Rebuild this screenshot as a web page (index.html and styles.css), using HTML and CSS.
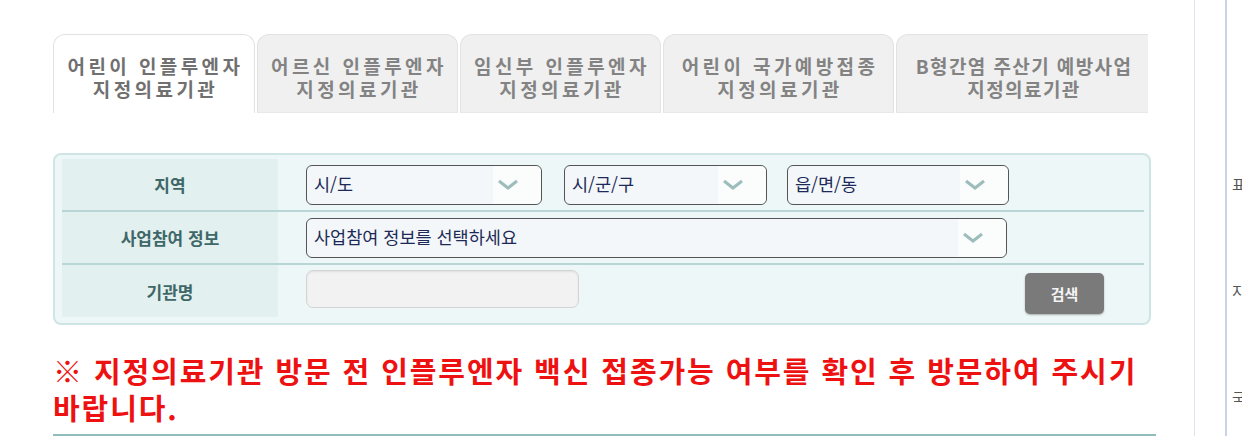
FILE: index.html
```
<!DOCTYPE html>
<html lang="ko">
<head>
    <meta charset="utf-8">
    <meta name="viewport" content="width=device-width, initial-scale=1">
    <link rel="stylesheet" href="styles.css">
</head>
<body>

<div class="page">
    <div class="main">
        <!-- tabs -->
        <div class="tabs">
            <div class="tab active">어린이 인플루엔자<br>지정의료기관</div>
            <div class="tab">어르신 인플루엔자<br>지정의료기관</div>
            <div class="tab">임신부 인플루엔자<br>지정의료기관</div>
            <div class="tab wide">어린이 국가예방접종<br>지정의료기관</div>
            <div class="tab last">B형간염 주산기 예방사업<br>지정의료기관</div>
        </div>

        <!-- search box -->
        <div class="search-box">
            <div class="row">
                <div class="label">지역</div>
                <div class="field">
                    <div class="select sido">시/도<span class="arrow"><svg width="22" height="12" viewBox="0 0 22 12"><polyline points="2,2 11,9 20,2" fill="none" stroke="#9dbdbd" stroke-width="3"/></svg></span></div>
                    <div class="select sigungu">시/군/구<span class="arrow"><svg width="22" height="12" viewBox="0 0 22 12"><polyline points="2,2 11,9 20,2" fill="none" stroke="#9dbdbd" stroke-width="3"/></svg></span></div>
                    <div class="select dong">읍/면/동<span class="arrow"><svg width="22" height="12" viewBox="0 0 22 12"><polyline points="2,2 11,9 20,2" fill="none" stroke="#9dbdbd" stroke-width="3"/></svg></span></div>
                </div>
            </div>
            <div class="row">
                <div class="label">사업참여 정보</div>
                <div class="field">
                    <div class="select business">사업참여 정보를 선택하세요<span class="arrow"><svg width="22" height="12" viewBox="0 0 22 12"><polyline points="2,2 11,9 20,2" fill="none" stroke="#9dbdbd" stroke-width="3"/></svg></span></div>
                </div>
            </div>
            <div class="row">
                <div class="label">기관명</div>
                <div class="field top">
                    <input type="text" class="name-input">
                    <span class="searchBtn">검색</span>
                </div>
            </div>
        </div>

        <p class="notice">※ 지정의료기관 방문 전 인플루엔자 백신 접종가능 여부를 확인 후 방문하여 주시기 바랍니다.</p>
        <div class="bottom-line"></div>
    </div>

    <div class="divider"></div>
    <div class="side">
        <div class="side-item first">표</div>
        <div class="side-item">지</div>
        <div class="side-item">국</div>
    </div>
</div>

</body>
</html>
```

FILE: styles.css
```
body {
    margin: 0;
    font-family: 'Noto Sans CJK KR', 'Noto Sans', sans-serif;
    background-color: #fff;
    color: #333;
}

.page {
    display: flex;
    height: 436px;
    overflow: hidden;
}

.main {
    margin-left: 53px;
    width: 1103px;
    flex-shrink: 0;
}

/* Tabs */
.tabs {
    display: flex;
    gap: 2px;
    width: 1095px;
    margin-top: 34px;
    overflow: hidden;
}

.tab {
    flex-shrink: 0;
    width: 201px;
    height: 79px;
    box-sizing: border-box;
    padding-top: 19px;
    padding-left: 3px;
    text-align: center;
    font-size: 19px;
    font-weight: bold;
    letter-spacing: 3.4px;
    line-height: 23px;
    color: #838383;
    background: #f0f0f0;
    border: 1px solid #e2e2e2;
    border-bottom: 1px solid #e8e8e8;
    border-radius: 12px 12px 0 0;
}

.tab.active {
    width: 202px;
    background: #fff;
    color: #707070;
    border-bottom: none;
}

.tab.wide {
    width: 231px;
}

.tab.last {
    width: 276px;
    padding-left: 0;
    padding-right: 20px;
    letter-spacing: 1.4px;
}

/* Search box */
.search-box {
    margin-top: 40px;
    width: 1098px;
    box-sizing: border-box;
    padding: 4px 5px 6px 7px;
    background: #eef7f7;
    border: 2px solid #cfe4e4;
    border-radius: 8px;
}

.row {
    display: flex;
    height: 51px;
    border-bottom: 2px solid #b9d6d6;
}

.row:last-child {
    height: 52px;
    border-bottom: none;
}

.label {
    width: 216px;
    flex-shrink: 0;
    display: flex;
    align-items: center;
    justify-content: center;
    background: #e2f0f0;
    font-size: 17px;
    font-weight: bold;
    color: #3f6767;
}

.field {
    flex: 1;
    display: flex;
    align-items: center;
    padding-left: 28px;
    gap: 22px;
}

.field.top {
    align-items: flex-start;
}

.select {
    position: relative;
    height: 40px;
    box-sizing: border-box;
    padding: 5px 0 0 7px;
    border: 1px solid #555;
    border-radius: 6px;
    background: #f3f7fa;
    font-size: 17.5px;
    color: #1d2a57;
}

.sido { width: 236px; }
.sigungu { width: 203px; }
.dong { width: 222px; margin-left: -2px; }
.business { width: 701px; }

/* arrow area of the select */
.arrow {
    position: absolute;
    right: 0;
    top: 0;
    width: 48px;
    height: 38px;
    display: flex;
    align-items: center;
    padding-left: 4px;
    box-sizing: border-box;
    border-radius: 0 6px 6px 0;
    background: #fbfcfc;
}

.name-input {
    margin-top: 5px;
    width: 273px;
    height: 38px;
    box-sizing: border-box;
    border: 1px solid #d4d4d4;
    border-radius: 7px;
    background: #f2f2f2;
    box-shadow: inset 0 1px 2px rgba(0, 0, 0, 0.08);
}

.searchBtn {
    margin-left: 424px;
    margin-top: 8px;
    width: 79px;
    height: 41px;
    display: flex;
    align-items: center;
    justify-content: center;
    background: #7a7a7a;
    border-radius: 5px;
    box-shadow: 0 1px 2px rgba(0, 0, 0, 0.3);
    color: #f4f4f4;
    font-size: 15px;
    font-weight: bold;
}

/* Notice */
.notice {
    margin: 27px 0 0 0;
    width: 1100px;
    font-size: 29px;
    font-weight: bold;
    letter-spacing: 1.9px;
    line-height: 37px;
    color: #ee1111;
}

.bottom-line {
    margin-top: 8px;
    height: 3px;
    background: #8fbcbc;
}

/* Right side */
.divider {
    margin-left: 38px;
    width: 30px;
    flex-shrink: 0;
    border-left: 1px solid #dfe5ef;
}

.side {
    flex: 1;
    border-left: 2px solid #c8d3e8;
    padding-left: 5px;
    font-size: 15px;
    color: #555;
}

.side-item {
    margin-top: 86px;
}

.side-item.first {
    margin-top: 173px;
}
```
